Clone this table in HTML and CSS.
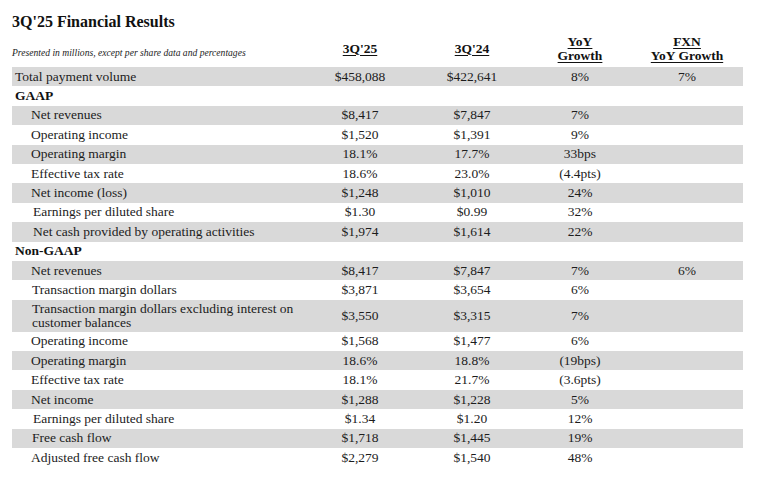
FILE: index.html
```html
<!DOCTYPE html>
<html lang="en">
<head>
<meta charset="utf-8">
<title>3Q'25 Financial Results</title>
<link rel="stylesheet" href="styles.css">
</head>
<body>
<div class="page">
  <h1 class="title">3Q'25 Financial Results</h1>
  <div class="row head">
    <div class="note">Presented in millions, except per share data and percentages</div>
    <div class="hcell"><span class="u">3Q'25</span></div>
    <div class="hcell"><span class="u">3Q'24</span></div>
    <div class="hcell"><span class="u">YoY</span><br><span class="u">Growth</span></div>
    <div class="hcell"><span class="u">FXN</span><br><span class="u">YoY Growth</span></div>
  </div>

  <div class="row shade"><div class="lbl top">Total payment volume</div><div class="v">$458,088</div><div class="v">$422,641</div><div class="v">8%</div><div class="v">7%</div></div>
  <div class="row"><div class="lbl top sec">GAAP</div><div class="v"></div><div class="v"></div><div class="v"></div><div class="v"></div></div>
  <div class="row shade"><div class="lbl">Net revenues</div><div class="v">$8,417</div><div class="v">$7,847</div><div class="v">7%</div><div class="v"></div></div>
  <div class="row"><div class="lbl">Operating income</div><div class="v">$1,520</div><div class="v">$1,391</div><div class="v">9%</div><div class="v"></div></div>
  <div class="row shade"><div class="lbl">Operating margin</div><div class="v">18.1%</div><div class="v">17.7%</div><div class="v">33bps</div><div class="v"></div></div>
  <div class="row"><div class="lbl">Effective tax rate</div><div class="v">18.6%</div><div class="v">23.0%</div><div class="v">(4.4pts)</div><div class="v"></div></div>
  <div class="row shade"><div class="lbl">Net income (loss)</div><div class="v">$1,248</div><div class="v">$1,010</div><div class="v">24%</div><div class="v"></div></div>
  <div class="row"><div class="lbl deep">Earnings per diluted share</div><div class="v">$1.30</div><div class="v">$0.99</div><div class="v">32%</div><div class="v"></div></div>
  <div class="row shade"><div class="lbl deep">Net cash provided by operating activities</div><div class="v">$1,974</div><div class="v">$1,614</div><div class="v">22%</div><div class="v"></div></div>

  <div class="row"><div class="lbl top sec">Non-GAAP</div><div class="v"></div><div class="v"></div><div class="v"></div><div class="v"></div></div>
  <div class="row shade"><div class="lbl">Net revenues</div><div class="v">$8,417</div><div class="v">$7,847</div><div class="v">7%</div><div class="v">6%</div></div>
  <div class="row"><div class="lbl mid">Transaction margin dollars</div><div class="v">$3,871</div><div class="v">$3,654</div><div class="v">6%</div><div class="v"></div></div>
  <div class="row shade tall"><div class="lbl mid two">Transaction margin dollars excluding interest on<br>customer balances</div><div class="v">$3,550</div><div class="v">$3,315</div><div class="v">7%</div><div class="v"></div></div>
  <div class="row"><div class="lbl">Operating income</div><div class="v">$1,568</div><div class="v">$1,477</div><div class="v">6%</div><div class="v"></div></div>
  <div class="row shade"><div class="lbl">Operating margin</div><div class="v">18.6%</div><div class="v">18.8%</div><div class="v">(19bps)</div><div class="v"></div></div>
  <div class="row"><div class="lbl">Effective tax rate</div><div class="v">18.1%</div><div class="v">21.7%</div><div class="v">(3.6pts)</div><div class="v"></div></div>
  <div class="row shade"><div class="lbl">Net income</div><div class="v">$1,288</div><div class="v">$1,228</div><div class="v">5%</div><div class="v"></div></div>
  <div class="row"><div class="lbl deep">Earnings per diluted share</div><div class="v">$1.34</div><div class="v">$1.20</div><div class="v">12%</div><div class="v"></div></div>
  <div class="row shade"><div class="lbl mid">Free cash flow</div><div class="v">$1,718</div><div class="v">$1,445</div><div class="v">19%</div><div class="v"></div></div>
  <div class="row"><div class="lbl">Adjusted free cash flow</div><div class="v">$2,279</div><div class="v">$1,540</div><div class="v">48%</div><div class="v"></div></div>
</div>
</body>
</html>
```

FILE: styles.css
```css
html, body {
  margin: 0;
  padding: 0;
  background: #ffffff;
}

body {
  font-family: "Liberation Serif", "Times New Roman", serif;
  color: #1c1c1c;
}

.page {
  padding: 12px 0 0 12px;
  width: 731px;
}

.title {
  margin: 0;
  font-size: 16px;
  line-height: 20px;
  font-weight: bold;
  color: #111;
}

.row {
  display: grid;
  grid-template-columns: 293px 110px 114px 102px 112px;
  align-items: center;
  height: 19.4px;
  font-size: 13.5px;
  line-height: 16px;
}

.row.shade {
  background: #d9d9d9;
}

.row.tall {
  height: 32px;
}

.row.head {
  height: 33px;
  margin-bottom: 2px;
  background: none;
}

.note {
  font-style: italic;
  font-size: 9.6px;
  line-height: 12px;
  align-self: end;
  padding-bottom: 6px;
  white-space: nowrap;
}

.hcell {
  text-align: center;
  font-weight: bold;
  line-height: 14px;
  color: #111;
}

.u {
  text-decoration: underline;
  text-decoration-thickness: 1px;
  text-underline-offset: 2px;
}

.lbl {
  padding-left: 19px;
  white-space: nowrap;
}

.lbl.top {
  padding-left: 3px;
}

.lbl.mid {
  padding-left: 20px;
}

.lbl.deep {
  padding-left: 21px;
}

.lbl.sec {
  font-weight: bold;
  color: #111;
}

.lbl.two {
  line-height: 14px;
}

.v {
  text-align: center;
}
```
